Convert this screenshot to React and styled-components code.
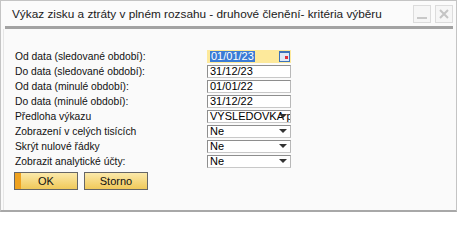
import React from 'react';
import styled, { createGlobalStyle } from 'styled-components';

const GlobalStyle = createGlobalStyle`
  html, body {
    margin: 0;
    padding: 0;
    background: #ffffff;
  }
  body {
    font-family: 'Liberation Sans', Arial, sans-serif;
  }
`;

const Window = styled.div`
  width: 457px;
  height: 212px;
  box-sizing: border-box;
  border: 1px solid #c4c4c4;
  border-bottom: 2px solid #a8a8a8;
  background: #fafafa;
  display: flex;
  flex-direction: column;
`;

const TitleBar = styled.div`
  height: 25px;
  display: flex;
  align-items: center;
  padding: 0 3px 0 11px;
  background: #fbfbfb;
`;

const Title = styled.div`
  flex: 1;
  font-size: 11.8px;
  color: #1a1a1a;
  white-space: nowrap;
`;

const WinButton = styled.div`
  width: 18px;
  height: 18px;
  margin-left: 4px;
  box-sizing: border-box;
  border: 1px solid #dcdcdc;
  background: #f6f6f6;
  display: flex;
  align-items: center;
  justify-content: center;
`;

const Separator = styled.div`
  height: 3px;
  margin: 0 3px 0 4px;
  background: #a3a3a3;
`;

const Body = styled.div`
  flex: 1;
  padding: 21px 0 0 11px;
  border-left: 1px solid #e6e6e6;
  margin-left: 2px;
`;

const Form = styled.div`
  display: grid;
  grid-template-columns: 192px 84px;
  grid-auto-rows: 13px;
  row-gap: 2px;
  align-items: center;
`;

const Label = styled.div`
  font-size: 10.3px;
  color: #111;
  white-space: nowrap;
  line-height: 13px;
`;

const Field = styled.div`
  position: relative;
  height: 13px;
  box-sizing: border-box;
  border: 1px solid ${(p) => (p.$focused ? '#fde99b' : '#8e8e8e')};
  border-right-color: ${(p) => (p.$focused ? '#fde99b' : '#b8b8b8')};
  border-bottom-color: ${(p) => (p.$focused ? '#fde99b' : '#c8c8c8')};
  background: ${(p) => (p.$focused ? '#fde99b' : '#ffffff')};
  font-size: 11px;
  line-height: 11px;
  color: #000;
  padding-left: 2px;
  display: flex;
  align-items: center;
  overflow: hidden;
  white-space: nowrap;
`;

const Selected = styled.span`
  background: #3a7bd5;
  color: #fff;
  padding: 0 1px;
`;

const CalendarButton = styled.div`
  position: absolute;
  right: 0;
  top: 0;
  width: 11px;
  height: 11px;
  box-sizing: border-box;
  background: #3c72b8;
  padding: 2px 1px 1px 1px;
  display: flex;
`;

const CalendarFace = styled.div`
  flex: 1;
  background: #dfe9f6;
  display: flex;
  align-items: center;
  justify-content: flex-end;
  padding-right: 1px;
`;

const CalendarDot = styled.div`
  width: 3px;
  height: 3px;
  background: #e0303a;
`;

const Arrow = styled.div`
  position: absolute;
  right: 3px;
  top: 3px;
  width: 0;
  height: 0;
  border-left: 4px solid transparent;
  border-right: 4px solid transparent;
  border-top: 4px solid #333;
`;

const ButtonRow = styled.div`
  display: flex;
  gap: 6px;
  margin-top: 4px;
  margin-left: -1px;
`;

const Button = styled.div`
  width: 64px;
  height: 18px;
  box-sizing: border-box;
  border: 1px solid #666;
  background: linear-gradient(#fbe9ab, #f5d77d 55%, #f0c95a);
  ${(p) =>
    p.$primary &&
    'box-shadow: inset 6px 0 0 #efa21f;'}
  font-size: 11px;
  color: #111;
  display: flex;
  align-items: center;
  justify-content: center;
`;

const rows = [
  { label: 'Od data (sledované období):', value: '01/01/23', type: 'date', focused: true },
  { label: 'Do data (sledované období):', value: '31/12/23', type: 'text' },
  { label: 'Od data (minulé období):', value: '01/01/22', type: 'text' },
  { label: 'Do data (minulé období):', value: '31/12/22', type: 'text' },
  { label: 'Předloha výkazu', value: 'VÝSLEDOVKA p', type: 'select' },
  { label: 'Zobrazení v celých tisících', value: 'Ne', type: 'select' },
  { label: 'Skrýt nulové řádky', value: 'Ne', type: 'select' },
  { label: 'Zobrazit analytické účty:', value: 'Ne', type: 'select' },
];

function App() {
  return (
    <>
      <GlobalStyle />
      <Window>
        <TitleBar>
          <Title>Výkaz zisku a ztráty v plném rozsahu - druhové členění- kritéria výběru</Title>
          <WinButton>
            <svg width="12" height="12" viewBox="0 0 12 12">
              <rect x="1" y="9" width="10" height="2" fill="#c8c8c8" />
            </svg>
          </WinButton>
          <WinButton>
            <svg width="12" height="12" viewBox="0 0 12 12">
              <path d="M2 2 L10 10 M10 2 L2 10" stroke="#c4c4c4" strokeWidth="2" />
            </svg>
          </WinButton>
        </TitleBar>
        <Separator />
        <Body>
          <Form>
            {rows.map((r) => (
              <React.Fragment key={r.label}>
                <Label>{r.label}</Label>
                <Field $focused={r.focused}>
                  {r.focused ? <Selected>{r.value}</Selected> : r.value}
                  {r.type === 'date' && (
                    <CalendarButton>
                      <CalendarFace>
                        <CalendarDot />
                      </CalendarFace>
                    </CalendarButton>
                  )}
                  {r.type === 'select' && <Arrow />}
                </Field>
              </React.Fragment>
            ))}
          </Form>
          <ButtonRow>
            <Button $primary>OK</Button>
            <Button>Storno</Button>
          </ButtonRow>
        </Body>
      </Window>
    </>
  );
}

export default App;
